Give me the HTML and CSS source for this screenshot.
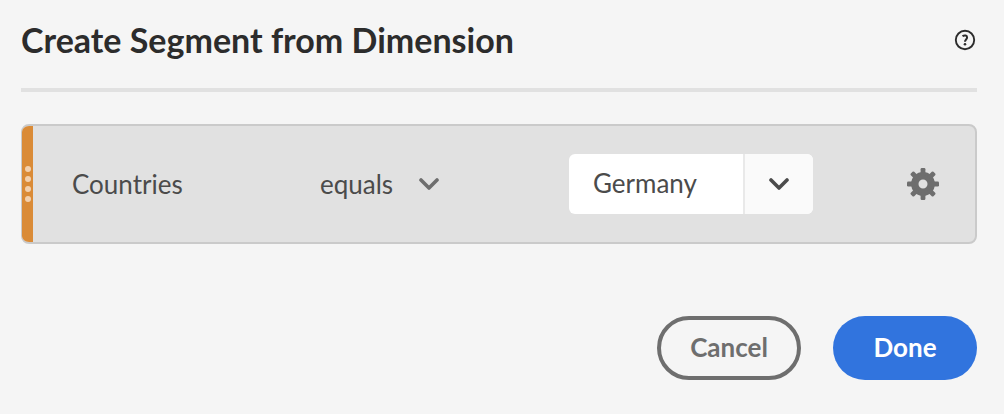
FILE: index.html
```html
<!DOCTYPE html>
<html lang="en">
<head>
<meta charset="utf-8">
<meta name="viewport" content="width=device-width, initial-scale=1">
<title>Create Segment from Dimension</title>
<link rel="stylesheet" href="styles.css">
</head>
<body>
<main class="dialog">
  <header class="dialog-header">
    <h1 class="title">Create Segment from Dimension</h1>
    <button class="icon-button" type="button" aria-label="Help">
      <svg class="help-icon" viewBox="0 0 22 22" fill="none" stroke="currentColor" aria-hidden="true">
        <circle cx="11" cy="11" r="9.2" stroke-width="1.9"/>
        <path d="M8.5 7.2C10.8 5.7 13.1 6.6 13.1 8.5C13.1 10.4 11 10.6 11 12.8" stroke-width="2"/>
        <circle cx="11" cy="15.2" r="1.3" fill="currentColor" stroke="none"/>
      </svg>
    </button>
  </header>
  <form class="form">
    <div class="rule">
      <div class="handle" aria-hidden="true">
        <span class="dot"></span><span class="dot"></span><span class="dot"></span><span class="dot"></span>
      </div>
      <div class="rule-body">
        <label class="dimension" for="value">Countries</label>
        <div class="operator">
          <select class="operator-select" aria-label="Operator">
            <option>equals</option>
          </select>
          <svg class="chevron" viewBox="0 0 20 12" aria-hidden="true"><path d="M2 2L10 10L18 2"/></svg>
        </div>
        <div class="combo">
          <input class="combo-input" id="value" type="text" value="Germany">
          <button class="combo-button" type="button" aria-label="Show values">
            <svg class="chevron" viewBox="0 0 20 12" aria-hidden="true"><path d="M2 2L10 10L18 2"/></svg>
          </button>
        </div>
        <button class="icon-button settings" type="button" aria-label="Settings">
          <svg class="gear-icon" viewBox="0 0 32 32" aria-hidden="true">
            <circle cx="16" cy="16" r="8.2" fill="none" stroke="currentColor" stroke-width="7.4"/>
            <g fill="currentColor">
              <rect id="tooth" x="13.6" y="0" width="4.8" height="8" rx="1.2"/>
              <use href="#tooth" transform="rotate(45 16 16)"/>
              <use href="#tooth" transform="rotate(90 16 16)"/>
              <use href="#tooth" transform="rotate(135 16 16)"/>
              <use href="#tooth" transform="rotate(180 16 16)"/>
              <use href="#tooth" transform="rotate(225 16 16)"/>
              <use href="#tooth" transform="rotate(270 16 16)"/>
              <use href="#tooth" transform="rotate(315 16 16)"/>
            </g>
          </svg>
        </button>
      </div>
    </div>
    <footer class="actions">
      <button class="button button-cancel" type="button">Cancel</button>
      <button class="button button-done" type="submit">Done</button>
    </footer>
  </form>
</main>
</body>
</html>
```
FILE: styles.css
```css
* {
  box-sizing: border-box;
}

body {
  margin: 0;
  background: #f5f5f5;
  color: #4b4b4b;
  font-family: Lato, "Open Sans", sans-serif;
  font-size: 26px;
  line-height: 32px;
}

button,
input,
select {
  margin: 0;
  padding: 0;
  border: 0;
  background: none;
  color: inherit;
  font: inherit;
}

svg {
  display: block;
}

.dialog {
  padding: 20px 27px 34px 21px;
}

.dialog-header {
  display: flex;
  align-items: center;
  justify-content: space-between;
  padding-bottom: 28px;
  border-bottom: 4px solid #e1e1e1;
}

.title {
  margin: 0;
  color: #2c2c2c;
  font-size: 34px;
  font-weight: 700;
  line-height: 40px;
}

.icon-button {
  flex: none;
  cursor: pointer;
}

.help-icon {
  width: 22px;
  height: 22px;
  color: #2c2c2c;
}

.dialog-header .icon-button {
  padding-right: 1px;
}

.form {
  display: flex;
  flex-direction: column;
  gap: 72px;
  padding-top: 32px;
}

.rule {
  display: flex;
  overflow: hidden;
  border: 2px solid #cacaca;
  border-left-width: 1px;
  border-radius: 8px;
  background: #e1e1e1;
}

.handle {
  display: flex;
  flex: none;
  flex-direction: column;
  align-items: center;
  justify-content: center;
  gap: 4px;
  width: 11px;
  background: #da8b37;
}

.dot {
  width: 6px;
  height: 6px;
  border-radius: 50%;
  background: #f2d0ae;
}

.rule-body {
  display: grid;
  flex: 1;
  grid-template-columns: 248fr 249fr 244fr 126fr;
  align-items: center;
  padding: 28px 36px 28px 39px;
}

.operator {
  display: grid;
  grid-template-columns: 119px;
  align-items: center;
}

.operator-select {
  grid-area: 1 / 1;
  height: 32px;
  appearance: none;
}

.operator .chevron {
  grid-area: 1 / 1;
  justify-self: end;
  color: #6e6e6e;
  pointer-events: none;
}

.chevron {
  width: 20px;
  height: 12px;
  fill: none;
  stroke: currentColor;
  stroke-linecap: round;
  stroke-linejoin: round;
  stroke-width: 3.6;
}

.combo {
  display: flex;
  overflow: hidden;
  height: 60px;
  border-radius: 6px;
  background: #fff;
}

.combo-input {
  flex: 1;
  min-width: 0;
  padding: 0 8px 2px 24px;
}

.combo-button {
  display: grid;
  flex: none;
  place-items: center;
  width: 70px;
  border-left: 2px solid #e9e9e9;
  background: #fafafa;
}

.settings {
  justify-self: end;
  color: #6e6e6e;
}

.gear-icon {
  width: 32px;
  height: 32px;
}

.actions {
  display: flex;
  justify-content: flex-end;
  gap: 32px;
}

.button {
  width: 144px;
  height: 64px;
  padding-bottom: 2px;
  border-radius: 32px;
  font-weight: 700;
  cursor: pointer;
}

.button-cancel {
  border: 4px solid #6e6e6e;
  color: #6e6e6e;
}

.button-done {
  background: #3174de;
  color: #fff;
}
```
